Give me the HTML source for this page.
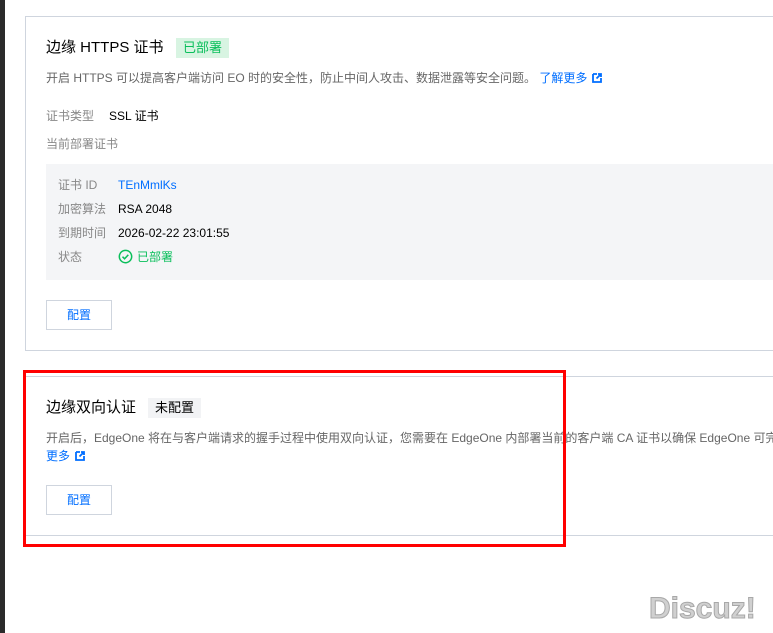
<!DOCTYPE html>
<html><head><meta charset="utf-8"><style>
*{margin:0;padding:0;box-sizing:border-box}
body{width:773px;height:633px;overflow:hidden;background:#fff;position:relative;font-family:"Liberation Sans","Noto Sans CJK SC",sans-serif;color:#000}
.strip{position:absolute;left:0;top:0;width:5px;height:633px;background:#2b2b2b}
.card{position:absolute;left:25px;width:760px;border:1px solid #cfd5de;border-right:none;background:#fff}
.abs{position:absolute;white-space:nowrap;line-height:18px}
.t{font-size:15px;color:#000;line-height:22px}
.d{font-size:12px;color:#666}
.l{font-size:12px;color:#888}
.v{font-size:12px;color:#000}
a{color:#006eff;text-decoration:none}
.tag{position:absolute;font-size:13px;padding:0 7px;height:20px;line-height:20px}
.btn{position:absolute;width:66px;height:30px;border:1px solid #cfd5de;color:#006eff;font-size:12px;text-align:center;line-height:28px;background:#fff}
.ext{display:inline-block;width:10px;height:10px;vertical-align:-1px;margin-left:5px}
</style></head><body>
<div class="strip"></div>
<div class="card" style="top:16px;height:335px"></div>
<div class="abs t" style="left:46px;top:37px">边缘 HTTPS 证书</div>
<div class="tag" style="left:176px;top:38px;background:#d8f4e2;color:#0abf5b">已部署</div>
<div class="abs d" style="left:46px;top:69px">开启 HTTPS 可以提高客户端访问 EO 时的安全性，防止中间人攻击、数据泄露等安全问题。 <a>了解更多<svg class="ext" viewBox="0 0 10 10"><path d="M1 1h4M1 1v8h8V5" stroke="#006eff" stroke-width="1.8" fill="none"/><path d="M4.5 5.5L9 1M6 1h3v3" stroke="#006eff" stroke-width="1.8" fill="none"/></svg></a></div>
<div class="abs l" style="left:46px;top:107px">证书类型</div>
<div class="abs v" style="left:109px;top:107px">SSL 证书</div>
<div class="abs l" style="left:46px;top:135px">当前部署证书</div>
<div class="abs" style="left:46px;top:164px;width:727px;height:116px;background:#f4f5f7"></div>
<div class="abs l" style="left:58px;top:176px">证书 ID</div><div class="abs v" style="left:118px;top:176px"><a>TEnMmlKs</a></div>
<div class="abs l" style="left:58px;top:200px">加密算法</div><div class="abs v" style="left:118px;top:200px">RSA 2048</div>
<div class="abs l" style="left:58px;top:224px">到期时间</div><div class="abs v" style="left:118px;top:224px">2026-02-22 23:01:55</div>
<div class="abs l" style="left:58px;top:248px">状态</div>
<div class="abs v" style="left:118px;top:248px;color:#0abf5b"><svg width="15" height="15" viewBox="0 0 16 16" style="vertical-align:-3px;margin-right:4px"><circle cx="8" cy="8" r="6.6" stroke="#0abf5b" stroke-width="1.6" fill="none"/><path d="M4.8 8.2l2.2 2.2 4-4.2" stroke="#0abf5b" stroke-width="1.6" fill="none"/></svg>已部署</div>
<div class="btn" style="left:46px;top:300px">配置</div>

<div class="card" style="top:376px;height:160px"></div>
<div class="abs t" style="left:46px;top:397px">边缘双向认证</div>
<div class="tag" style="left:148px;top:398px;background:#f2f3f5;color:#000">未配置</div>
<div class="abs d" style="left:46px;top:429px">开启后，EdgeOne 将在与客户端请求的握手过程中使用双向认证，您需要在 EdgeOne 内部署当前的客户端 CA 证书以确保 EdgeOne 可完成认证。了解</div>
<div class="abs d" style="left:46px;top:447px"><a>更多<svg class="ext" viewBox="0 0 10 10"><path d="M1 1h4M1 1v8h8V5" stroke="#006eff" stroke-width="1.8" fill="none"/><path d="M4.5 5.5L9 1M6 1h3v3" stroke="#006eff" stroke-width="1.8" fill="none"/></svg></a></div>
<div class="btn" style="left:46px;top:485px">配置</div>

<div class="abs" style="left:23px;top:370px;width:543px;height:177px;border:3px solid #ff0000"></div>
<div class="abs" style="left:649px;top:594px;font-size:30px;line-height:30px;font-weight:bold;color:#d0d0d0;-webkit-text-stroke:1px #a8a8a8;font-family:'Liberation Sans',sans-serif">Discuz!</div>
</body></html>
